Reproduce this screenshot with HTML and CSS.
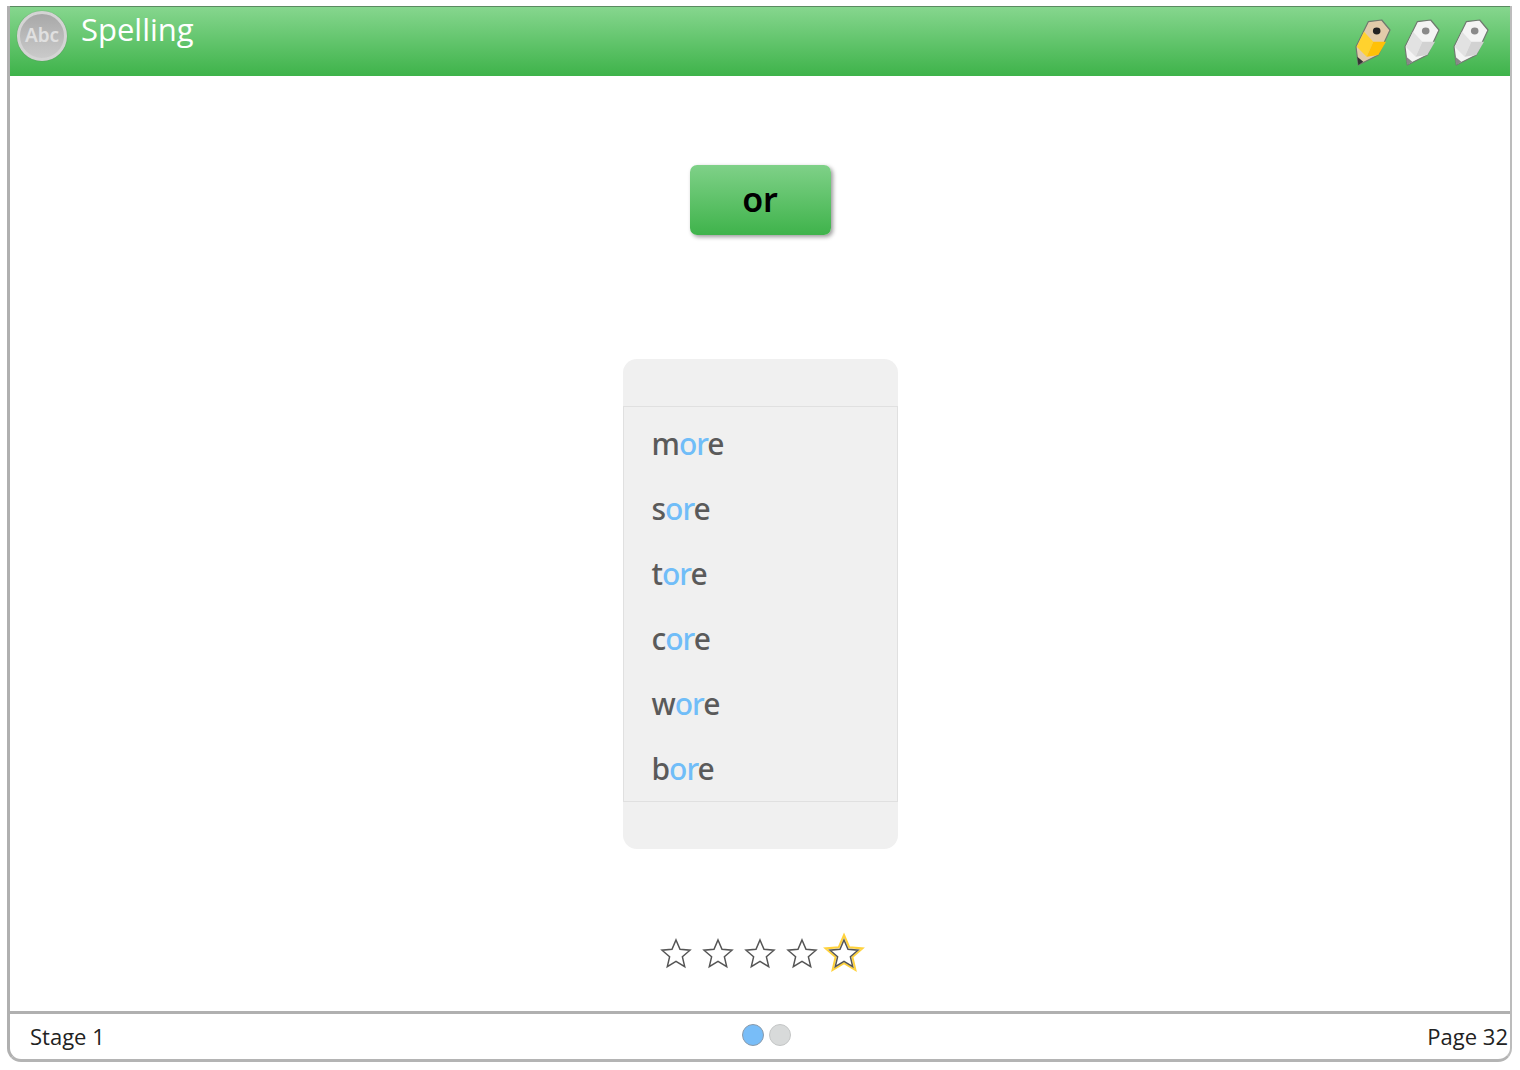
FILE: index.html
```html
<!DOCTYPE html>
<html lang="en">
<head>
    <meta charset="UTF-8">
    <title>Spelling</title>
    <link rel="stylesheet" href="styles.css">
</head>
<body>
    <div class="frame">
        <div class="top-bar">
            <div class="abc-badge">Abc</div>
            <div class="top-title">Spelling</div>
            <div class="pencils">
                <svg class="pencil" viewBox="0 0 40 50" width="40" height="50">
                    <path d="M16.3 4.7 L29.7 3 L38 13 L26.3 38 L6.3 48 L4 29.7 Z" fill="#e2cbaa" stroke="#6f7a6f" stroke-width="1.2" stroke-linejoin="round"/>
                    <path d="M12 14.7 L21.3 24.7 L14.7 39.7 L4.7 29.7 Z" fill="#ffd22e"/>
                    <path d="M21.3 24.7 L34 24.7 L26.3 38 L14.7 39.7 Z" fill="#ffc107"/>
                    <path d="M5.3 39.7 L11.3 44.7 L6.3 48 Z" fill="#333"/>
                    <ellipse cx="24.7" cy="14" rx="3.8" ry="3.4" fill="#222"/>
                </svg>
                <svg class="pencil" viewBox="0 0 40 50" width="40" height="50">
                    <path d="M16.3 4.7 L29.7 3 L38 13 L26.3 38 L6.3 48 L4 29.7 Z" fill="#f4f4f4" stroke="#6f7a6f" stroke-width="1.2" stroke-linejoin="round"/>
                    <path d="M12 14.7 L21.3 24.7 L14.7 39.7 L4.7 29.7 Z" fill="#e2e2e2"/>
                    <path d="M21.3 24.7 L34 24.7 L26.3 38 L14.7 39.7 Z" fill="#d2d2d2"/>
                    <path d="M5.3 39.7 L11.3 44.7 L6.3 48 Z" fill="#888"/>
                    <ellipse cx="24.7" cy="14" rx="3.8" ry="3.4" fill="#8a8a8a"/>
                </svg>
                <svg class="pencil" viewBox="0 0 40 50" width="40" height="50">
                    <path d="M16.3 4.7 L29.7 3 L38 13 L26.3 38 L6.3 48 L4 29.7 Z" fill="#f4f4f4" stroke="#6f7a6f" stroke-width="1.2" stroke-linejoin="round"/>
                    <path d="M12 14.7 L21.3 24.7 L14.7 39.7 L4.7 29.7 Z" fill="#e2e2e2"/>
                    <path d="M21.3 24.7 L34 24.7 L26.3 38 L14.7 39.7 Z" fill="#d2d2d2"/>
                    <path d="M5.3 39.7 L11.3 44.7 L6.3 48 Z" fill="#888"/>
                    <ellipse cx="24.7" cy="14" rx="3.8" ry="3.4" fill="#8a8a8a"/>
                </svg>
            </div>
        </div>

        <div class="content">
            <div class="sound-button">or</div>

            <div class="word-panel">
                <div class="word-list">
                    <div class="word">m<span class="hl">or</span>e</div>
                    <div class="word">s<span class="hl">or</span>e</div>
                    <div class="word">t<span class="hl">or</span>e</div>
                    <div class="word">c<span class="hl">or</span>e</div>
                    <div class="word">w<span class="hl">or</span>e</div>
                    <div class="word">b<span class="hl">or</span>e</div>
                </div>
            </div>

            <div class="stars">
                <svg class="star" viewBox="0 0 42 42" width="42" height="42"><path d="M21 8 L25 17.3 L35 18.2 L27.4 24.8 L29.7 34.6 L21 29.4 L12.3 34.6 L14.6 24.8 L7 18.2 L17 17.3 Z" fill="#fff" stroke="#555" stroke-width="1.5"/></svg>
                <svg class="star" viewBox="0 0 42 42" width="42" height="42"><path d="M21 8 L25 17.3 L35 18.2 L27.4 24.8 L29.7 34.6 L21 29.4 L12.3 34.6 L14.6 24.8 L7 18.2 L17 17.3 Z" fill="#fff" stroke="#555" stroke-width="1.5"/></svg>
                <svg class="star" viewBox="0 0 42 42" width="42" height="42"><path d="M21 8 L25 17.3 L35 18.2 L27.4 24.8 L29.7 34.6 L21 29.4 L12.3 34.6 L14.6 24.8 L7 18.2 L17 17.3 Z" fill="#fff" stroke="#555" stroke-width="1.5"/></svg>
                <svg class="star" viewBox="0 0 42 42" width="42" height="42"><path d="M21 8 L25 17.3 L35 18.2 L27.4 24.8 L29.7 34.6 L21 29.4 L12.3 34.6 L14.6 24.8 L7 18.2 L17 17.3 Z" fill="#fff" stroke="#555" stroke-width="1.5"/></svg>
                <svg class="star" viewBox="0 0 42 42" width="42" height="42">
                    <path d="M21 3 L26.2 15.2 L39.5 16.4 L29.4 25.1 L32.4 38 L21 31.2 L9.6 38 L12.6 25.1 L2.5 16.4 L15.8 15.2 Z" fill="#fff" stroke="#ffd23c" stroke-width="2"/>
                    <path d="M21 8 L25 17.3 L35 18.2 L27.4 24.8 L29.7 34.6 L21 29.4 L12.3 34.6 L14.6 24.8 L7 18.2 L17 17.3 Z" fill="#fff" stroke="#555" stroke-width="1.5"/>
                </svg>
            </div>
        </div>

        <div class="bottom-bar">
            <div class="stage-label">Stage 1</div>
            <div class="page-dots">
                <span class="dot dot-on"></span>
                <span class="dot"></span>
            </div>
            <div class="page-label">Page 32</div>
        </div>
    </div>
</body>
</html>
```

FILE: styles.css
```css
/* Page frame */
html,
body {
    margin: 0;
    padding: 0;
}

body {
    background-color: #fff;
    font-family: "Open Sans", "Noto Sans", sans-serif;
    padding: 6px 8px 0 7px;
    height: 1070px;
    box-sizing: border-box;
}

.frame {
    display: flex;
    flex-direction: column;
    height: 1056px;
    box-sizing: border-box;
    border-left: 3px solid #b0b0b0;
    border-right: 2px solid #bcbcbc;
    border-bottom: 3px solid #b4b4b4;
    border-radius: 0 0 14px 14px;
    background-color: #fff;
}

/* Green title bar */
.top-bar {
    display: flex;
    align-items: flex-start;
    height: 70px;
    box-sizing: border-box;
    border-top: 1px solid #5a8a60;
    background: linear-gradient(#86d68e, #3eb34a);
    flex-shrink: 0;
}

.abc-badge {
    width: 50px;
    height: 50px;
    box-sizing: border-box;
    margin: 4px 0 0 7px;
    border: 3px solid #d4d4d4;
    border-radius: 50%;
    background: linear-gradient(#a8a8a8, #cacaca);
    box-shadow: 0 0 1px #666;
    color: #e0e0e0;
    font-family: "Noto Sans", sans-serif;
    font-size: 19px;
    font-weight: 600;
    line-height: 43px;
    text-align: center;
}

.top-title {
    margin: 0 0 0 14px;
    color: #fff;
    font-size: 31px;
    line-height: 44px;
    font-weight: 400;
}

.pencils {
    display: flex;
    gap: 9px;
    margin: 10px 20px 0 auto;
}

/* Middle area */
.content {
    flex: 1;
    display: flex;
    flex-direction: column;
    align-items: center;
}

.sound-button {
    width: 141px;
    height: 70px;
    margin-top: 89px;
    border-radius: 7px;
    background: linear-gradient(#7fd188, #3fb34b);
    box-shadow: 2px 2px 4px rgba(0, 0, 0, 0.4);
    color: #000;
    font-family: "Noto Sans", sans-serif;
    font-size: 34px;
    font-weight: 600;
    line-height: 68px;
    text-align: center;
}

.word-panel {
    width: 275px;
    height: 490px;
    margin-top: 124px;
    padding: 47px 0;
    box-sizing: border-box;
    border-radius: 14px;
    background-color: #f0f0f0;
}

.word-list {
    height: 396px;
    box-sizing: border-box;
    padding: 4px 0 0 28px;
    border: 1px solid #e0e0e0;
}

.word {
    height: 65px;
    color: #5a5a5a;
    font-family: "Noto Sans", sans-serif;
    font-size: 30px;
    font-weight: 500;
    letter-spacing: -1px;
    line-height: 65px;
}

.hl {
    color: #70bdf8;
}

.stars {
    display: flex;
    margin-top: 83px;
}

/* Footer */
.bottom-bar {
    display: grid;
    grid-template-columns: 1fr auto 1fr;
    align-items: center;
    height: 48px;
    box-sizing: border-box;
    border-top: 3px solid #b0b0b0;
    color: #222;
    font-size: 22px;
    flex-shrink: 0;
}

.stage-label {
    padding-left: 20px;
    margin-bottom: 1px;
}

.page-label {
    text-align: right;
    padding-right: 2px;
    margin-bottom: 1px;
}

.page-dots {
    display: flex;
    gap: 5px;
    margin-bottom: 4px;
    margin-left: 13px;
}

.dot {
    width: 22px;
    height: 22px;
    box-sizing: border-box;
    border: 1.5px solid #c4c6c6;
    border-radius: 50%;
    background-color: #d8dada;
}

.dot-on {
    border-color: #8a9aaa;
    background-color: #78bdf8;
}
```
